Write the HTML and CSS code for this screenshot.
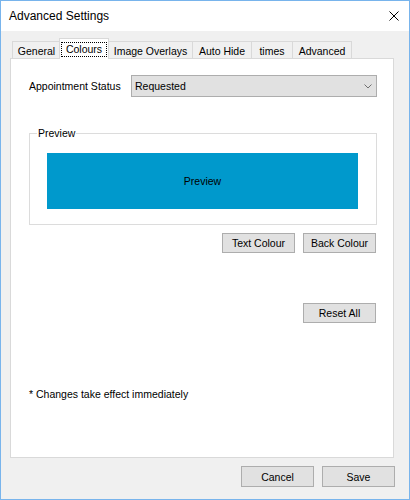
FILE: index.html
```html
<!DOCTYPE html>
<html>
<head>
<meta charset="utf-8">
<link rel="stylesheet" href="styles.css">
</head>
<body>
<div class="window">
  <div class="titlebar">
    <span class="title">Advanced Settings</span>
    <svg class="close" width="10" height="10" viewBox="0 0 10 10"><path d="M0.5 0.5 L9.5 9.5 M9.5 0.5 L0.5 9.5" stroke="#000" stroke-width="1" fill="none"/></svg>
  </div>
  <div class="client">
    <div class="tabs">
      <div class="tab first w-general">General</div>
      <div class="tab selected"><span class="focus">Colours</span></div>
      <div class="tab w-image">Image Overlays</div>
      <div class="tab w-auto">Auto Hide</div>
      <div class="tab w-times">times</div>
      <div class="tab w-adv">Advanced</div>
    </div>
    <div class="panel">
      <div class="row">
        <span class="label">Appointment Status</span>
        <div class="select">
          <span>Requested</span>
          <svg width="8" height="5" viewBox="0 0 8 5"><path d="M0.5 0.5 L4 4 L7.5 0.5" stroke="#707070" stroke-width="1" fill="none"/></svg>
        </div>
      </div>
      <div class="group">
        <span class="legend">Preview</span>
        <div class="preview">Preview</div>
      </div>
      <div class="btnrow colours">
        <button class="btn">Text Colour</button>
        <button class="btn">Back Colour</button>
      </div>
      <div class="btnrow reset">
        <button class="btn">Reset All</button>
      </div>
      <p class="note">* Changes take effect immediately</p>
    </div>
    <div class="footer">
      <button class="btn">Cancel</button>
      <button class="btn">Save</button>
    </div>
  </div>
</div>
</body>
</html>
```
FILE: styles.css
```css
html, body {
  margin: 0;
  padding: 0;
}
body {
  font-family: "Liberation Sans", Arial, sans-serif;
  font-size: 10.5px;
  color: #000;
}
.window {
  width: 410px;
  height: 500px;
  box-sizing: border-box;
  border: 1px solid #78b4ec;
  background: #f0f0f0;
  display: flex;
  flex-direction: column;
}
.titlebar {
  height: 30px;
  flex: none;
  background: #fff;
  display: flex;
  align-items: center;
  justify-content: space-between;
  padding: 0 10px 0 8px;
}
.title {
  font-size: 12px;
}
.close {
  display: block;
}
.client {
  flex: 1;
  display: flex;
  flex-direction: column;
  padding: 7px 15px 0 9px;
}
.tabs {
  display: flex;
  align-items: flex-end;
  height: 21px;
  padding-left: 2px;
  margin-bottom: -1px;
  position: relative;
  z-index: 1;
}
.tab {
  box-sizing: border-box;
  height: 17px;
  margin-bottom: 1px;
  margin-right: -1px;
  border: 1px solid #d9d9d9;
  border-bottom: none;
  background: #f0f0f0;
  display: flex;
  align-items: center;
  justify-content: center;
  padding-top: 1px;
  white-space: nowrap;
}
.w-general { width: 49px; }
.w-image { width: 85px; }
.w-auto { width: 60px; }
.w-times { width: 42px; }
.w-adv { width: 60px; }
.tab.selected {
  width: 50px;
  height: 21px;
  margin-bottom: 0;
  margin-left: -1px;
  background: #fff;
  position: relative;
  z-index: 2;
  padding: 3px 1px 2px 1px;
  align-items: stretch;
}
.focus {
  flex: 1;
  border: 1px dotted #000;
  display: flex;
  align-items: center;
  justify-content: center;
  padding-bottom: 1px;
}
.panel {
  box-sizing: border-box;
  height: 400px;
  background: #fff;
  border: 1px solid #d9d9d9;
  padding: 16px 16px 0 18px;
  display: flex;
  flex-direction: column;
}
.row {
  display: flex;
  align-items: center;
  height: 22px;
}
.label {
  width: 102px;
  flex: none;
}
.select {
  box-sizing: border-box;
  width: 246px;
  height: 22px;
  border: 1px solid #adadad;
  background: #e1e1e1;
  display: flex;
  align-items: center;
  justify-content: space-between;
  padding: 0 4px 0 3px;
}
.select svg {
  display: block;
}
.group {
  position: relative;
  box-sizing: border-box;
  height: 92px;
  margin-top: 36px;
  border: 1px solid #dcdcdc;
}
.legend {
  position: absolute;
  left: 7px;
  top: -8px;
  background: #fff;
  padding: 0 1px;
  line-height: 14px;
}
.preview {
  margin: 19px 0 0 17px;
  width: 311px;
  height: 56px;
  background: #0099cc;
  display: flex;
  align-items: center;
  justify-content: center;
}
.btnrow {
  display: flex;
  justify-content: flex-end;
  gap: 8px;
  padding-right: 1px;
}
.btnrow.colours {
  margin-top: 8px;
}
.btnrow.reset {
  margin-top: 50px;
}
.btn {
  box-sizing: border-box;
  width: 73px;
  height: 20px;
  border: 1px solid #adadad;
  background: #e1e1e1;
  font-family: "Liberation Sans", Arial, sans-serif;
  font-size: 10.5px;
  color: #000;
  padding: 0;
  margin: 0;
}
.note {
  margin: 65px 0 0 0;
  line-height: 13px;
}
.footer {
  display: flex;
  justify-content: flex-end;
  gap: 8px;
  margin-top: 8px;
  margin-right: -1px;
}
.footer .btn {
  height: 21px;
}
```
